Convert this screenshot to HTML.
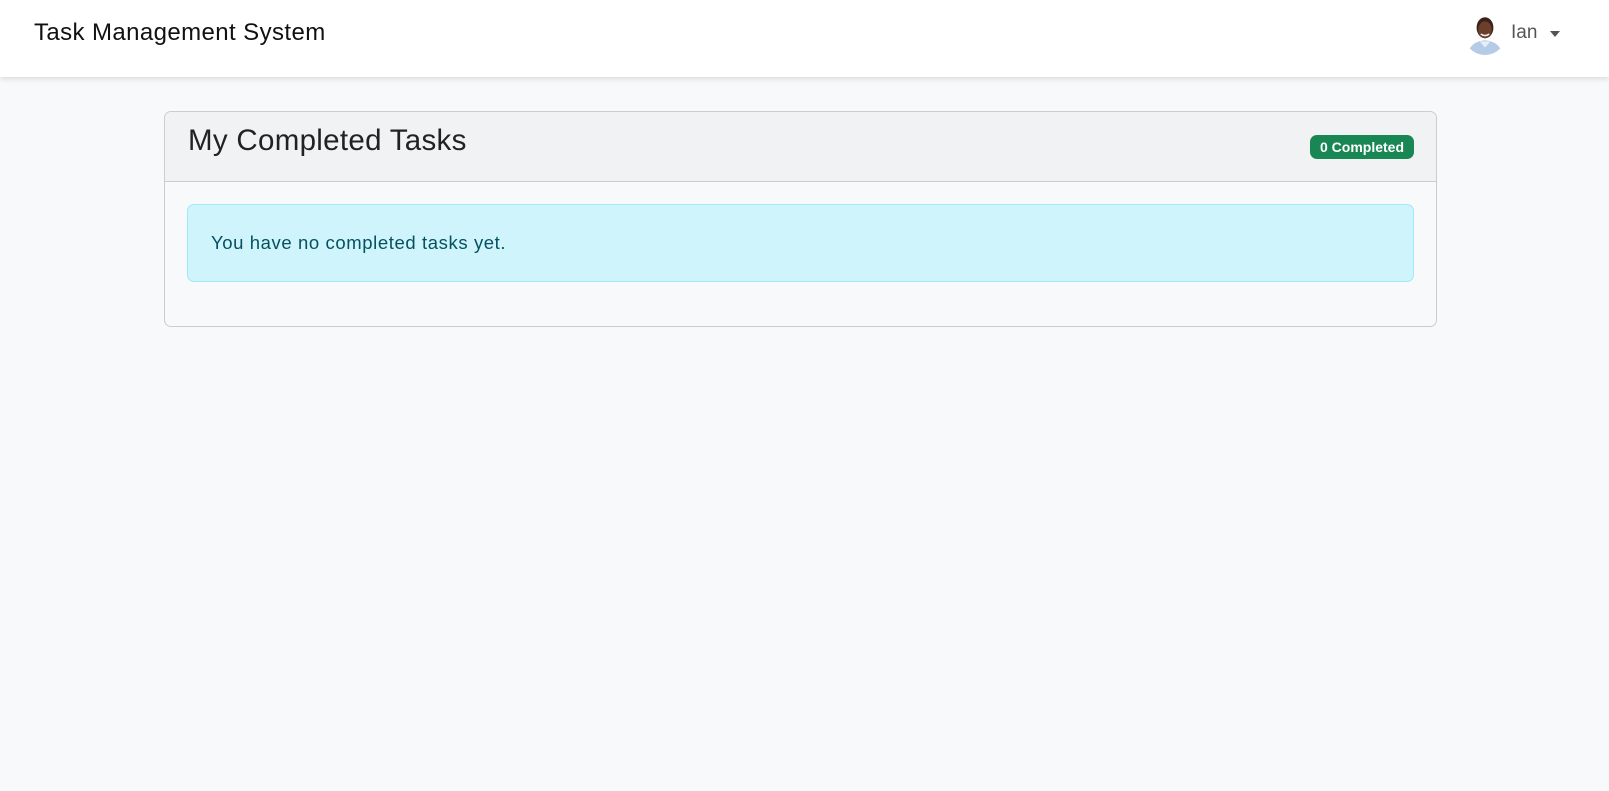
<!DOCTYPE html>
<html><head><meta charset="utf-8"><style>
*{box-sizing:border-box;margin:0;padding:0}
body{width:1609px;height:791px;background:#f8f9fa;font-family:"Liberation Sans",sans-serif;color:#212529;overflow:hidden}
.nav{position:absolute;left:0;top:0;width:1609px;height:77px;background:#fff;box-shadow:0 2px 5px rgba(0,0,0,.12)}
.brand{position:absolute;left:34px;top:19px;font-size:24px;letter-spacing:.4px;color:#111}
.user{position:absolute;left:1464px;top:13px;width:42px;height:42px;border-radius:50%;overflow:hidden}
.uname{position:absolute;left:1511px;top:22px;font-size:19px;color:#555}
.caret{position:absolute;left:1550px;top:31px;border-left:5px solid transparent;border-right:5px solid transparent;border-top:6px solid #555}
.card{position:absolute;left:164px;top:111px;width:1273px;height:216px;border:1px solid #ccc;border-radius:7px;background:#f8f9fa;overflow:hidden}
.hdr{height:70px;background:#f1f2f4;border-bottom:1px solid #ccc;position:relative}
.hdr h1{position:absolute;left:23px;top:12px;font-weight:normal;font-size:29.5px;letter-spacing:.3px;color:#222}
.badge{position:absolute;right:22px;top:23px;background:#198754;color:#fff;font-weight:bold;font-size:14px;padding:4px 10px;border-radius:7px}
.alert{position:absolute;left:22px;top:92px;width:1227px;height:78px;background:#cff4fc;border:1px solid #9eeaf9;border-radius:7px;color:#055160;font-size:18.5px;letter-spacing:.6px;padding:27px 23px}
</style></head><body>
<div class="nav">
<div class="brand">Task Management System</div>
<div class="user"><svg width="42" height="42" viewBox="0 0 40 40"><rect width="40" height="40" fill="#fff"/><path d="M3 40 Q6 27 20 26 Q34 27 37 40Z" fill="#b6cbe6"/><path d="M15 27 L20 33 L25 27Z" fill="#e8eef6"/><ellipse cx="20" cy="14" rx="8" ry="10" fill="#3a2218"/><ellipse cx="20" cy="16" rx="6.5" ry="8" fill="#6b3f2a"/><path d="M16 20 Q20 23 24 20" stroke="#eee" stroke-width="1.5" fill="none"/></svg></div>
<div class="uname">Ian</div><div class="caret"></div>
</div>
<div class="card">
<div class="hdr"><h1>My Completed Tasks</h1><span class="badge">0 Completed</span></div>
<div class="alert">You have no completed tasks yet.</div>
</div>
</body></html>
